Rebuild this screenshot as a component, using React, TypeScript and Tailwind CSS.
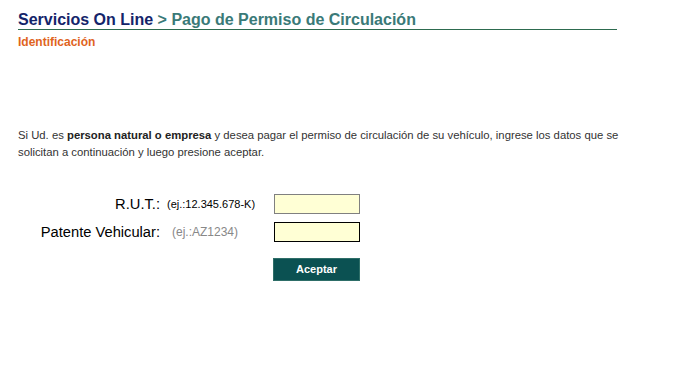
export default function App() {
  return (
    <div className="w-[685px] h-[369px] bg-white font-['Liberation_Sans',Arial,sans-serif]">
      <div className="pl-[18px] pt-[10px] w-[617px]">
        <h1 className="text-[16px] font-bold leading-[19px] border-b border-[#2d6b4f] pb-0">
          <span className="text-[#14246a]">Servicios On Line</span>
          <span className="text-[#3a7a78]"> &gt; Pago de Permiso de Circulación</span>
        </h1>
        <h2 className="text-[12px] font-bold text-[#e0641e] mt-[5px] leading-[14px]">Identificación</h2>

        <p className="mt-[78px] text-[11.3px] leading-[17px] text-[#333] w-[610px]">
          Si Ud. es <b className="text-[#222]">persona natural o empresa</b> y desea pagar el permiso de circulación de su vehículo, ingrese los datos que se solicitan a continuación y luego presione aceptar.
        </p>

        <div className="mt-[33px] grid grid-cols-[142px_114px_86px] gap-y-[8px] items-center">
          <div className="text-right text-[14.7px] text-black leading-[20px]">R.U.T.:</div>
          <div className="pl-[7px] text-[11px] text-black">(ej.:12.345.678-K)</div>
          <input className="h-[20px] w-[86px] bg-[#ffffd5] border border-[#808080] outline-none" />

          <div className="text-right text-[14.7px] text-black leading-[20px]">Patente Vehicular:</div>
          <div className="pl-[12px] text-[12px] text-[#888]">(ej.:AZ1234)</div>
          <input className="h-[20px] w-[86px] bg-[#ffffd5] border border-black outline-none" />

          <div />
          <div />
          <button className="mt-[8px] -ml-px h-[23px] w-[87px] bg-[#0b5152] border border-[#2e6e68] text-white text-[11px] font-bold">
            Aceptar
          </button>
        </div>
      </div>
    </div>
  );
}
